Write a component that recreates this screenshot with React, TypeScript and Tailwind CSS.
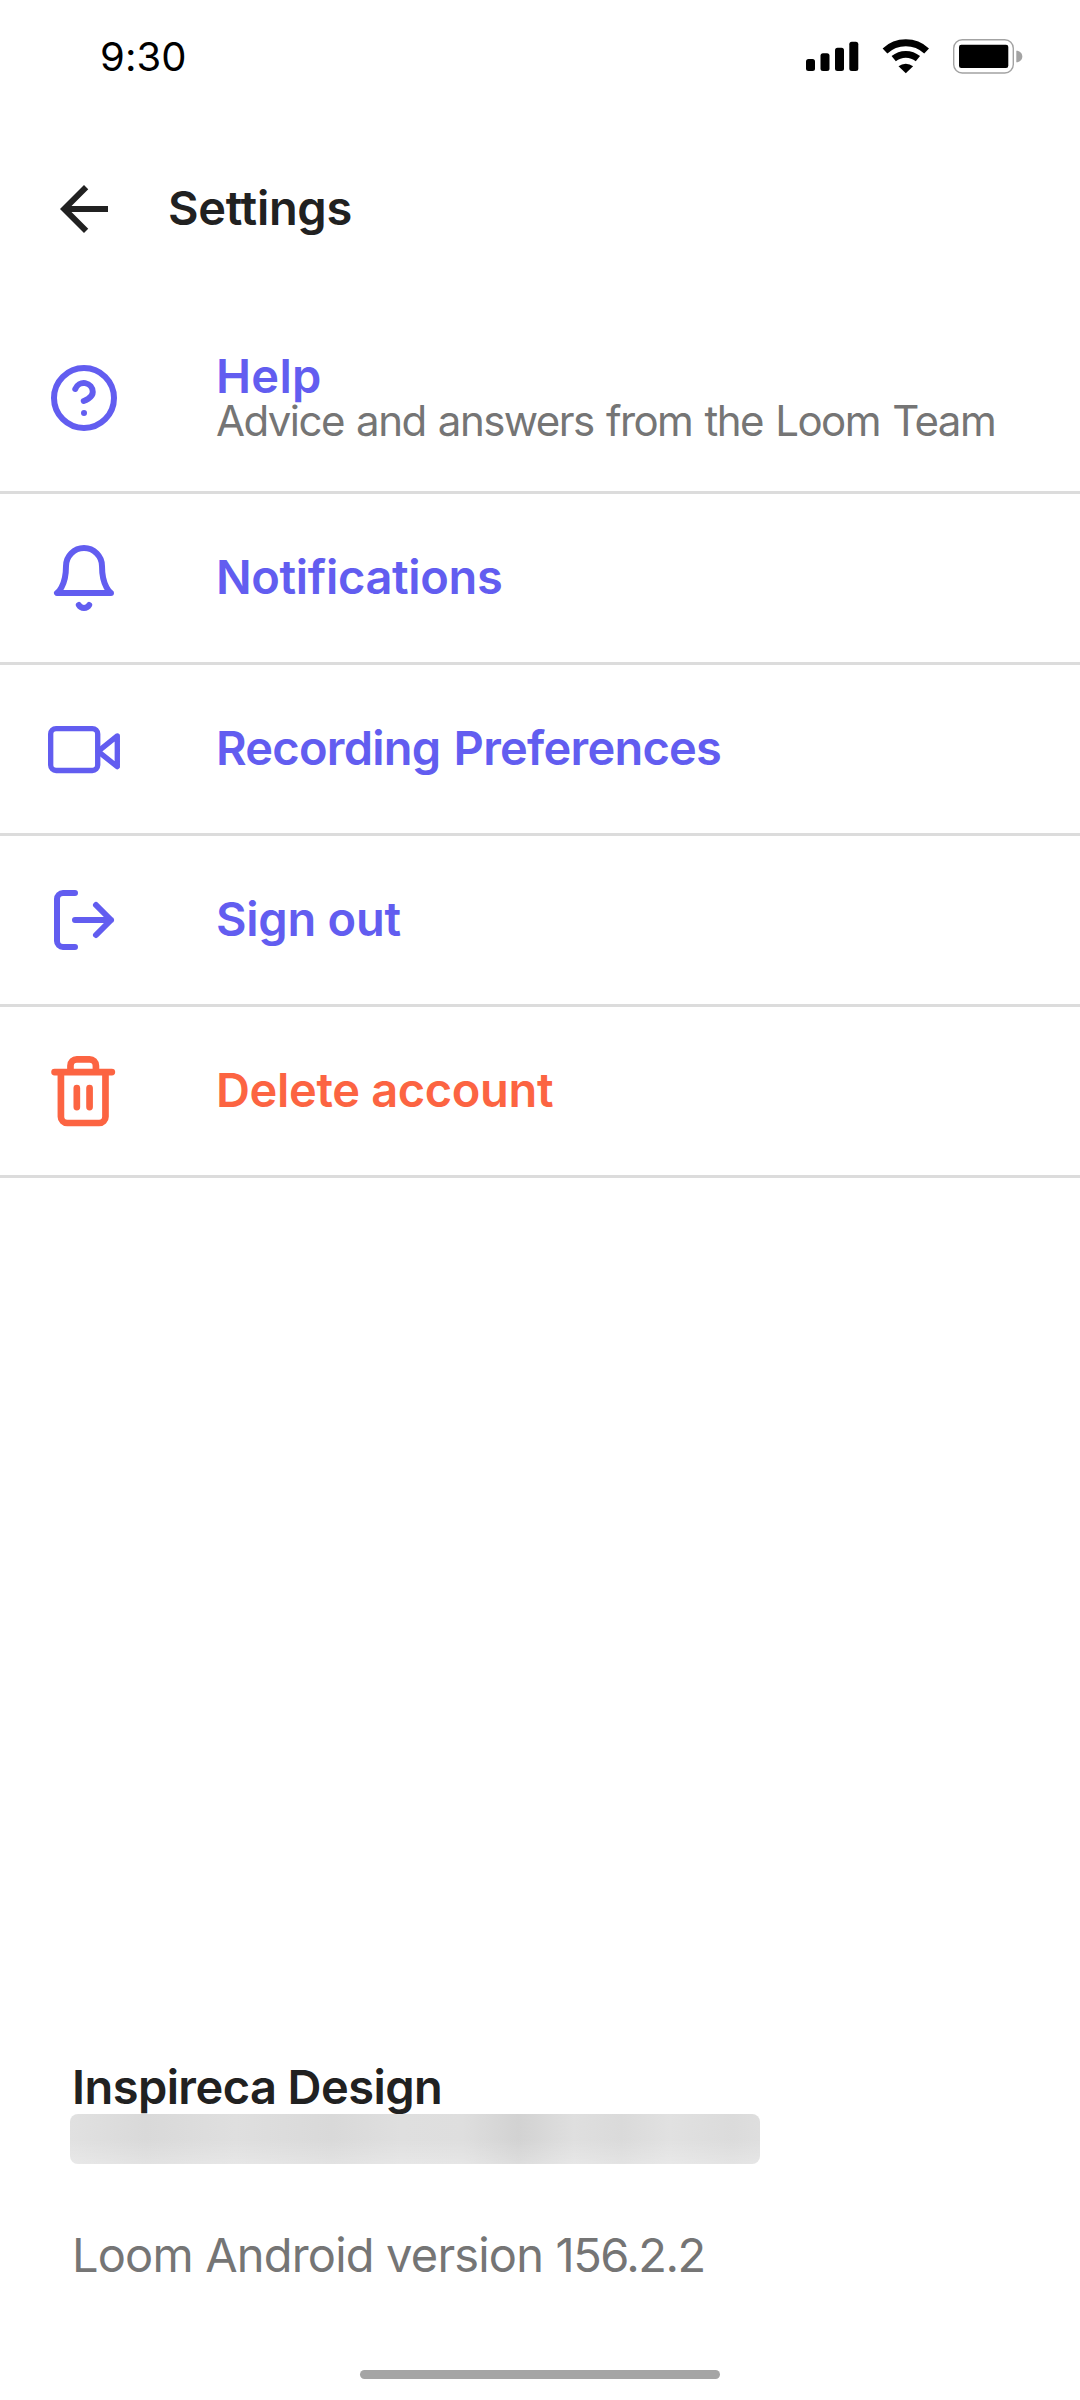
import React from "react";

interface SettingsItem {
  label: string;
  description?: string;
  icon: React.ReactNode;
  labelClass: string;
  rowClass: string;
}

const BackIcon = () => (
  <svg viewBox="0 0 24 24" className="size-[72px]" fill="currentColor">
    <path d="M20 11H7.83l5.59-5.59L12 4l-8 8 8 8 1.41-1.41L7.83 13H20v-2z" />
  </svg>
);

const HelpIcon = () => (
  <svg viewBox="0 0 24 24" className="size-[72px]" fill="none" stroke="currentColor" strokeWidth="2" strokeLinecap="round" strokeLinejoin="round">
    <circle cx="12" cy="12" r="10" />
    <path d="M9.09 9a3 3 0 0 1 5.83 1c0 2-3 3-3 3" />
    <path d="M12 17h.01" />
  </svg>
);

const BellIcon = () => (
  <svg viewBox="0 0 24 24" className="size-[72px]" fill="none" stroke="currentColor" strokeWidth="2" strokeLinecap="round" strokeLinejoin="round">
    <path d="M18 8A6 6 0 0 0 6 8c0 7-3 9-3 9h18s-3-2-3-9" />
    <path d="M13.73 21a2 2 0 0 1-3.46 0" />
  </svg>
);

const VideoIcon = () => (
  <svg viewBox="0 0 24 24" className="size-[72px]" fill="none" stroke="currentColor" strokeWidth="1.78" strokeLinecap="round" strokeLinejoin="round">
    <rect x="0.89" y="5.22" width="15.68" height="13.95" rx="1.8" />
    <path d="M23.1 7.65 16.7 12.8l6.4 5.1z" />
  </svg>
);

const SignOutIcon = () => (
  <svg viewBox="0 0 24 24" className="size-[72px]" fill="none" stroke="currentColor" strokeWidth="2" strokeLinecap="round" strokeLinejoin="round">
    <path d="M9 21H5a2 2 0 0 1-2-2V5a2 2 0 0 1 2-2h4" />
    <path d="m16 17 5-5-5-5M21 12H9" />
  </svg>
);

const TrashIcon = () => (
  <svg viewBox="0 0 24 24" className="-ml-[3px] size-[76.4px]" fill="none" stroke="currentColor" strokeWidth="2.1" strokeLinecap="round" strokeLinejoin="round">
    <path d="M3 6h18M19 6v14a2 2 0 0 1-2 2H7a2 2 0 0 1-2-2V6m3 0V4a2 2 0 0 1 2-2h4a2 2 0 0 1 2 2v2" />
    <path d="M10 11v6M14 11v6" />
  </svg>
);

const items: SettingsItem[] = [
  {
    label: "Help",
    description: "Advice and answers from the Loom Team",
    icon: <HelpIcon />,
    labelClass: "tracking-[0.3px]",
    rowClass: "h-[189px] text-[#625df0]",
  },
  {
    label: "Notifications",
    icon: <BellIcon />,
    labelClass: "tracking-[-0.35px]",
    rowClass: "h-[171px] text-[#625df0]",
  },
  {
    label: "Recording Preferences",
    icon: <VideoIcon />,
    labelClass: "tracking-[-0.75px] [word-spacing:2px]",
    rowClass: "h-[171px] text-[#625df0]",
  },
  {
    label: "Sign out",
    icon: <SignOutIcon />,
    labelClass: "tracking-[-0.25px]",
    rowClass: "h-[171px] text-[#625df0]",
  },
  {
    label: "Delete account",
    icon: <TrashIcon />,
    labelClass: "tracking-[-0.35px]",
    rowClass: "h-[171px] text-[#fc6442]",
  },
];

const StatusBar: React.FC = () => (
  <div className="flex h-[113px] items-start justify-between pt-[36px] pl-[100px] pr-[57px] text-black">
    <span className="pt-px text-[40px] leading-[40px] tracking-[0.1px]">9:30</span>
    <svg viewBox="0 0 220 40" className="h-[40px] w-[220px]" fill="currentColor">
      {/* Sinal */}
      <rect x="3" y="23" width="9" height="12" rx="2.5" />
      <rect x="17.5" y="17.3" width="9" height="17.7" rx="2.5" />
      <rect x="32" y="11.7" width="9" height="23.3" rx="2.5" />
      <rect x="46.3" y="5.7" width="9" height="29.3" rx="2.5" />
      {/* Wi-Fi */}
      <path d="M102.8 37.3 95.5 30.3a11.5 11.5 0 0 1 14.6 0z" />
      <path d="M82 15a30.5 30.5 0 0 1 41.6 0" fill="none" stroke="currentColor" strokeWidth="7" />
      <path d="M90.7 22.7a19 19 0 0 1 24.2 0" fill="none" stroke="currentColor" strokeWidth="6.7" />
      {/* Bateria */}
      <rect x="150.7" y="3.7" width="59.6" height="33.3" rx="8.5" fill="none" stroke="#a3a3a3" strokeWidth="1.4" />
      <rect x="156" y="8.7" width="49.3" height="23.3" rx="2.3" />
      <path d="M213.3 14.7c3.6 0 6 2.6 6 5.8s-2.4 5.8-6 5.8z" fill="#a3a3a3" />
    </svg>
  </div>
);

const App: React.FC = () => {
  return (
    <div className="flex h-[2400px] w-[1080px] flex-col overflow-hidden bg-white font-['Inter',sans-serif] text-[#212121]">
      <StatusBar />

      <header className="flex h-[192px] items-center gap-[48px] pl-[48px]">
        <BackIcon />
        <h1 className="pb-[3px] text-[47px] leading-[56px] font-semibold tracking-[-0.3px]">Settings</h1>
      </header>

      <ul>
        {items.map((item) => (
          <li
            key={item.label}
            className={`flex items-center border-b-[3px] border-[#dcdcdc] pl-[48px] ${item.rowClass}`}
          >
            <div className="w-[168px] shrink-0">{item.icon}</div>
            <div className="pb-px whitespace-nowrap">
              <p className={`pb-px text-[47px] leading-[46px] font-semibold ${item.labelClass}`}>{item.label}</p>
              {item.description && (
                <p className="text-[42px] leading-[42px] tracking-[-1.55px] text-[#757575] [word-spacing:2px]">
                  {item.description}
                </p>
              )}
            </div>
          </li>
        ))}
      </ul>

      {/* Conta e versão do app */}
      <footer className="mt-auto flex h-[340px] flex-col">
        <p className="pl-[72px] text-[47px] leading-[54px] font-semibold tracking-[-0.57px]">Inspireca Design</p>
        <div className="ml-[70px] h-[50px] w-[690px] rounded-[8px] bg-[linear-gradient(to_bottom,transparent_50%,#ffffff40),linear-gradient(to_right,#e1e1e1,#d9d9d9_11%,#dfdfdf_24%,#d9d9d9_38%,#dfdfdf_48%,#dedede_57%,#d2d2d2_65%,#dfdfdf_73%,#dadada_80%,#e1e1e1_87%,#dbdbdb_96%,#dedede)]" />
        <p className="mt-[63px] pl-[72px] text-[47px] leading-[56px] tracking-[-0.82px] text-[#757575]">
          Loom Android version <span className="tracking-[-1.5px]">156.2.2</span>
        </p>
        <div className="mx-auto mt-auto mb-[21px] h-[9px] w-[360px] rounded-full bg-[#a5a5a5]" />
      </footer>
    </div>
  );
};

export default App;
